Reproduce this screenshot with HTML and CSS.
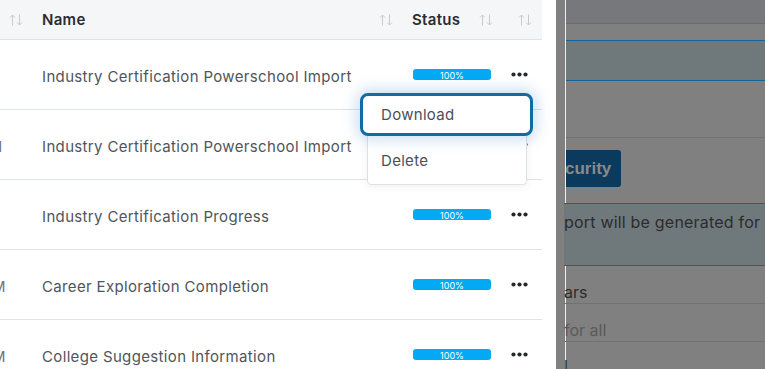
FILE: index.html
```html
<!DOCTYPE html>
<html lang="en">
<head>
    <meta charset="UTF-8">
    <meta name="viewport" content="width=device-width, initial-scale=1.0">
    <title>Reports</title>
    <link rel="stylesheet" href="styles.css">
</head>
<body>

<div class="page">

    <!-- Reports table -->
    <div class="table-wrap">
        <div class="report-table">
            <div class="tr thead">
                <div class="th th-date"><span></span><svg class="sort" viewBox="0 0 14 12"><path d="M3.5 11.5V1 M1 3.5 3.5 1 6 3.5 M10.5 0.5V11 M8 8.5 10.5 11 13 8.5"/></svg></div>
                <div class="th"><span>Name</span><svg class="sort" viewBox="0 0 14 12"><path d="M3.5 11.5V1 M1 3.5 3.5 1 6 3.5 M10.5 0.5V11 M8 8.5 10.5 11 13 8.5"/></svg></div>
                <div class="th"><span>Status</span><svg class="sort" viewBox="0 0 14 12"><path d="M3.5 11.5V1 M1 3.5 3.5 1 6 3.5 M10.5 0.5V11 M8 8.5 10.5 11 13 8.5"/></svg></div>
                <div class="th th-actions"><svg class="sort" viewBox="0 0 14 12"><path d="M3.5 11.5V1 M1 3.5 3.5 1 6 3.5 M10.5 0.5V11 M8 8.5 10.5 11 13 8.5"/></svg></div>
            </div>

            <div class="tr">
                <div class="td td-date">3/4/2024 9:12 AM</div>
                <div class="td td-name">Industry Certification Powerschool Import</div>
                <div class="td"><div class="progress">100%</div></div>
                <div class="td td-actions">
                    <svg class="dots" viewBox="0 0 17 5"><circle cx="2.5" cy="2.5" r="2.1"/><circle cx="8.5" cy="2.5" r="2.1"/><circle cx="14.5" cy="2.5" r="2.1"/></svg>
                    <!-- open menu -->
                    <div class="menu">
                        <div class="menu-item active">Download</div>
                        <div class="menu-item">Delete</div>
                    </div>
                </div>
            </div>

            <div class="tr">
                <div class="td td-date">2/27/2024 11:11 AM</div>
                <div class="td td-name">Industry Certification Powerschool Import</div>
                <div class="td"><div class="progress">100%</div></div>
                <div class="td td-actions"><svg class="dots" viewBox="0 0 17 5"><circle cx="2.5" cy="2.5" r="2.1"/><circle cx="8.5" cy="2.5" r="2.1"/><circle cx="14.5" cy="2.5" r="2.1"/></svg></div>
            </div>

            <div class="tr">
                <div class="td td-date">2/9/2024 8:05 AM</div>
                <div class="td td-name">Industry Certification Progress</div>
                <div class="td"><div class="progress">100%</div></div>
                <div class="td td-actions"><svg class="dots" viewBox="0 0 17 5"><circle cx="2.5" cy="2.5" r="2.1"/><circle cx="8.5" cy="2.5" r="2.1"/><circle cx="14.5" cy="2.5" r="2.1"/></svg></div>
            </div>

            <div class="tr">
                <div class="td td-date">1/18/2024 12:33 PM</div>
                <div class="td td-name">Career Exploration Completion</div>
                <div class="td"><div class="progress">100%</div></div>
                <div class="td td-actions"><svg class="dots" viewBox="0 0 17 5"><circle cx="2.5" cy="2.5" r="2.1"/><circle cx="8.5" cy="2.5" r="2.1"/><circle cx="14.5" cy="2.5" r="2.1"/></svg></div>
            </div>

            <div class="tr">
                <div class="td td-date">1/16/2024 12:20 PM</div>
                <div class="td td-name">College Suggestion Information</div>
                <div class="td"><div class="progress">100%</div></div>
                <div class="td td-actions"><svg class="dots" viewBox="0 0 17 5"><circle cx="2.5" cy="2.5" r="2.1"/><circle cx="8.5" cy="2.5" r="2.1"/><circle cx="14.5" cy="2.5" r="2.1"/></svg></div>
            </div>
        </div>
    </div>

    <!-- Modal behind overlay -->
    <aside class="side">
        <div class="modal">
            <div class="modal-head"></div>
            <div class="alert alert-top"></div>
            <div class="block"></div>
            <div class="btn-security"><span>curity</span></div>
            <div class="alert alert-note">port will be generated for</div>
            <div class="field">ars</div>
            <div class="field placeholder">for all</div>
            <div class="field last">l</div>
        </div>
    </aside>

</div>

</body>
</html>
```

FILE: styles.css
```css
* {margin: 0; padding: 0; box-sizing: border-box;}

body {
    font-family: 'Inter', 'Noto Sans', sans-serif;
    background: #fff;
    color: #4b5057;
    overflow: hidden;
}

.page {
    display: flex;
    height: 369px;
}

/* ---------- table ---------- */

.table-wrap {
    width: 556px;
    flex-shrink: 0;
    overflow: hidden;
}

.report-table {
    width: 682px;
    margin-left: -140px;
}

.tr {
    display: grid;
    grid-template-columns: 170px 370px 100px 42px;
    height: 70px;
    border-bottom: 1px solid #dfe4e8;
    align-items: center;
    font-size: 15px;
}

.tr.thead {
    height: 40px;
    background: #f5f6f8;
    color: #2a2e33;
    font-weight: 600;
}

.th {
    display: flex;
    justify-content: space-between;
    align-items: center;
    padding: 0 7px 0 12px;
    letter-spacing: 0.3px;
}

.th-actions {
    justify-content: flex-end;
    padding-right: 10px;
}

.sort {
    width: 14px;
    height: 12px;
    fill: none;
    stroke: #c6cbd0;
    stroke-width: 1;
}

.td {
    padding-left: 12px;
    white-space: nowrap;
    letter-spacing: 0.35px;
}

.td-name {
    padding-top: 3px;
    color: #50555b;
}

.td-date {
    color: #6b7076;
    font-size: 14px;
    letter-spacing: 0.2px;
    padding-top: 3px;
}

.progress {
    width: 78px;
    height: 11px;
    border-radius: 3px;
    background: #03a9f4;
    color: #fff;
    font-size: 9px;
    line-height: 14px;
    text-align: center;
    margin-left: 1px;
    overflow: hidden;
    letter-spacing: 0;
}

.td-actions {
    position: relative;
    align-self: stretch;
    display: flex;
    align-items: center;
    padding-left: 11px;
}

.dots {
    display: block;
    width: 17px;
    height: 5px;
    fill: #24272b;
}

/* dropdown menu */
.menu {
    position: absolute;
    top: 53px;
    right: 15px;
    width: 160px;
    height: 92px;
    background: #fff;
    border: 1px solid #dde2e6;
    border-radius: 4px;
    box-shadow: 0 2px 8px rgba(0,0,0,0.06);
    z-index: 5;
}

.menu-item {
    height: 46px;
    display: flex;
    align-items: center;
    padding-left: 13px;
    padding-top: 3px;
    font-size: 15px;
    letter-spacing: 0.3px;
    color: #4b5057;
}

.menu-item.active {
    margin: -1px -7px 0 -8px;
    height: 43px;
    padding-left: 18px;
    padding-top: 0;
    border: 3px solid #0f6ca6;
    border-radius: 8px;
    box-shadow: 0 0 14px 4px rgba(30,120,200,0.22);
    background: #fff;
}

/* ---------- side modal (under overlay) ---------- */

.side {
    flex: 1;
    background: #808080;
    padding-left: 9px;
    overflow: hidden;
}

.modal {
    height: 100%;
    border-left: 1px solid #eeeeee;
    background: #808080;
    font-family: 'Inter', 'Noto Sans', sans-serif;
    color: #2c2c2c;
}

.modal-head {
    height: 24px;
    background: #77787b;
    border-bottom: 1px solid #6c6c6c;
}

.alert {
    background: #6f797c;
    border-top: 1px solid #10639b;
    border-bottom: 1px solid #10639b;
}

.alert-top {
    margin-top: 16px;
    height: 41px;
}

.block {
    height: 57px;
    border-bottom: 1px solid #717171;
}

.btn-security {
    margin-top: 12px;
    width: 55px;
    height: 37px;
    background: #0b3a5d;
    border-radius: 0 3px 3px 0;
    display: flex;
    align-items: center;
    overflow: hidden;
}

.btn-security span {
    font-family: 'Liberation Sans', Arial, sans-serif;
    font-weight: 700;
    font-size: 17px;
    color: #8a8a8a;
    margin-left: -1px;
}

.alert-note {
    margin-top: 16px;
    height: 63px;
    padding-top: 8px;
    font-size: 16px;
    letter-spacing: 0.2px;
    white-space: nowrap;
    margin-left: -2px;
}

.field {
    height: 38px;
    border-bottom: 1px solid #717171;
    font-size: 16px;
    display: flex;
    align-items: flex-end;
    padding-bottom: 1px;
    margin-left: -2px;
}

.field.placeholder {
    color: #5a5a5a;
}

.field.last {
    border-bottom: none;
    height: 30px;
    padding-bottom: 0;
    align-items: flex-start;
    padding-top: 14px;
}
```
